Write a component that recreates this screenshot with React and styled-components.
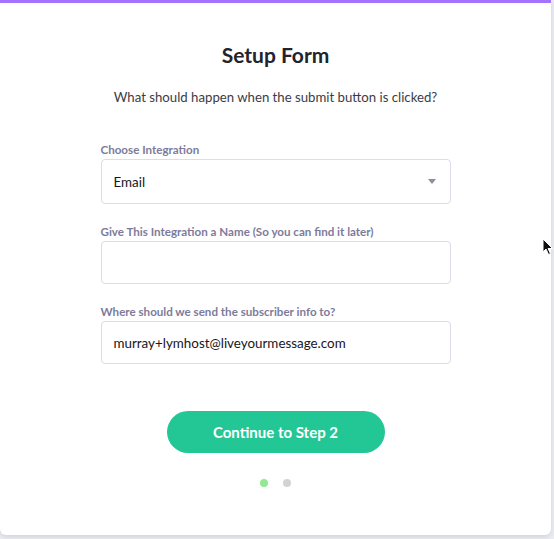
import React from 'react';
import styled, { createGlobalStyle } from 'styled-components';

const GlobalStyle = createGlobalStyle`
  html, body {
    margin: 0;
    padding: 0;
    background: #ececf3;
    font-family: Lato, "Open Sans", sans-serif;
  }
  * { box-sizing: border-box; }
`;

const Page = styled.div`
  position: relative;
  width: 554px;
  height: 539px;
  overflow: hidden;
`;

const Card = styled.div`
  width: 551px;
  height: 535px;
  background: #ffffff;
  border-top: 3px solid #a472fb;
  border-radius: 0 0 6px 6px;
  box-shadow: 0 2px 5px rgba(90, 90, 130, 0.18);
  display: flex;
  flex-direction: column;
  align-items: center;
  padding-top: 38px;
`;

const Title = styled.h1`
  margin: 0;
  font-size: 21px;
  line-height: 28px;
  font-weight: 700;
  color: #23232d;
`;

const Subtitle = styled.p`
  margin: 19px 0 0;
  font-size: 13.2px;
  line-height: 18px;
  color: #3b3b46;
`;

const Form = styled.div`
  width: 350px;
  margin-top: 36px;
  display: flex;
  flex-direction: column;
`;

const Field = styled.div`
  display: flex;
  flex-direction: column;
  margin-bottom: ${({ last }) => (last ? '0' : '20px')};
`;

const Label = styled.label`
  font-size: 11.6px;
  line-height: 16px;
  font-weight: 700;
  color: #7d7b9b;
  margin-bottom: 1px;
`;

const Box = styled.div`
  height: ${({ tall }) => (tall ? '45px' : '43px')};
  border: 1px solid #dedbee;
  border-radius: 4px;
  display: flex;
  align-items: center;
  justify-content: space-between;
  padding: 0 14px 0 12px;
  font-size: 13.4px;
  color: #16161c;
`;

const Caret = styled.span`
  width: 0;
  height: 0;
  border-left: 4.5px solid transparent;
  border-right: 4.5px solid transparent;
  border-top: 5px solid #908da2;
`;

const Button = styled.button`
  margin-top: 47px;
  width: 218px;
  height: 42px;
  border: none;
  border-radius: 21px;
  background: #23c795;
  color: #ffffff;
  font-family: Lato, sans-serif;
  font-size: 15px;
  font-weight: 700;
  cursor: pointer;
`;

const Dots = styled.div`
  margin-top: 26px;
  display: flex;
  gap: 15px;
`;

const Dot = styled.span`
  width: 8px;
  height: 8px;
  border-radius: 50%;
  background: ${({ active }) => (active ? '#93e993' : '#d3d3d6')};
`;

const Pointer = styled.svg`
  position: absolute;
  left: 542px;
  top: 238px;
`;

export default function App() {
  return (
    <Page>
      <GlobalStyle />
      <Card>
        <Title>Setup Form</Title>
        <Subtitle>What should happen when the submit button is clicked?</Subtitle>
        <Form>
          <Field>
            <Label>Choose Integration</Label>
            <Box tall>
              <span>Email</span>
              <Caret />
            </Box>
          </Field>
          <Field>
            <Label>Give This Integration a Name (So you can find it later)</Label>
            <Box />
          </Field>
          <Field last>
            <Label>Where should we send the subscriber info to?</Label>
            <Box>murray+lymhost@liveyourmessage.com</Box>
          </Field>
        </Form>
        <Button>Continue to Step 2</Button>
        <Dots>
          <Dot active />
          <Dot />
        </Dots>
      </Card>
      <Pointer width="12" height="18" viewBox="0 0 12 18">
        <path d="M1 1 L1 14 L4 11 L6.5 16.5 L8.5 15.5 L6 10.5 L10.5 10.5 Z" fill="#111" stroke="#fff" strokeWidth="1" />
      </Pointer>
    </Page>
  );
}
